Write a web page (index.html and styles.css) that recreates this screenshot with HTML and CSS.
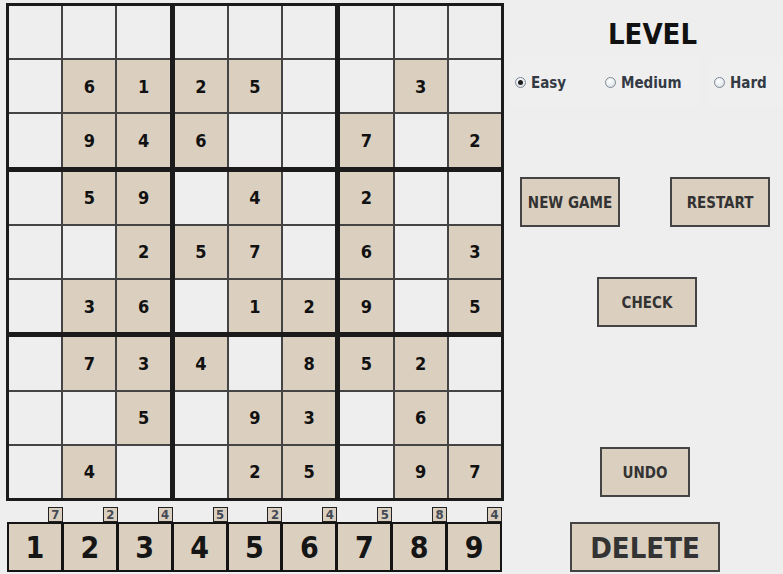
FILE: index.html
```html
<!DOCTYPE html>
<html>
<head>
<meta charset="utf-8">
<title>Sudoku</title>
<link rel="stylesheet" href="styles.css">
</head>
<body>
<div class="app">
  <div class="left">
    <div class="board">
      <div class="block">
        <div class="cell"></div><div class="cell"></div><div class="cell"></div>
        <div class="cell"></div><div class="cell given">6</div><div class="cell given">1</div>
        <div class="cell"></div><div class="cell given">9</div><div class="cell given">4</div>
      </div>
      <div class="block">
        <div class="cell"></div><div class="cell"></div><div class="cell"></div>
        <div class="cell given">2</div><div class="cell given">5</div><div class="cell"></div>
        <div class="cell given">6</div><div class="cell"></div><div class="cell"></div>
      </div>
      <div class="block">
        <div class="cell"></div><div class="cell"></div><div class="cell"></div>
        <div class="cell"></div><div class="cell given">3</div><div class="cell"></div>
        <div class="cell given">7</div><div class="cell"></div><div class="cell given">2</div>
      </div>
      <div class="block">
        <div class="cell"></div><div class="cell given">5</div><div class="cell given">9</div>
        <div class="cell"></div><div class="cell"></div><div class="cell given">2</div>
        <div class="cell"></div><div class="cell given">3</div><div class="cell given">6</div>
      </div>
      <div class="block">
        <div class="cell"></div><div class="cell given">4</div><div class="cell"></div>
        <div class="cell given">5</div><div class="cell given">7</div><div class="cell"></div>
        <div class="cell"></div><div class="cell given">1</div><div class="cell given">2</div>
      </div>
      <div class="block">
        <div class="cell given">2</div><div class="cell"></div><div class="cell"></div>
        <div class="cell given">6</div><div class="cell"></div><div class="cell given">3</div>
        <div class="cell given">9</div><div class="cell"></div><div class="cell given">5</div>
      </div>
      <div class="block">
        <div class="cell"></div><div class="cell given">7</div><div class="cell given">3</div>
        <div class="cell"></div><div class="cell"></div><div class="cell given">5</div>
        <div class="cell"></div><div class="cell given">4</div><div class="cell"></div>
      </div>
      <div class="block">
        <div class="cell given">4</div><div class="cell"></div><div class="cell given">8</div>
        <div class="cell"></div><div class="cell given">9</div><div class="cell given">3</div>
        <div class="cell"></div><div class="cell given">2</div><div class="cell given">5</div>
      </div>
      <div class="block">
        <div class="cell given">5</div><div class="cell given">2</div><div class="cell"></div>
        <div class="cell"></div><div class="cell given">6</div><div class="cell"></div>
        <div class="cell"></div><div class="cell given">9</div><div class="cell given">7</div>
      </div>
    </div>
    <div class="numbar">
      <div class="num">1<span class="badge">7</span></div>
      <div class="num">2<span class="badge">2</span></div>
      <div class="num">3<span class="badge">4</span></div>
      <div class="num">4<span class="badge">5</span></div>
      <div class="num">5<span class="badge">2</span></div>
      <div class="num">6<span class="badge">4</span></div>
      <div class="num">7<span class="badge">5</span></div>
      <div class="num">8<span class="badge">8</span></div>
      <div class="num">9<span class="badge">4</span></div>
    </div>
  </div>
  <div class="panel">
    <div class="level">LEVEL</div>
    <div class="radios">
      <div class="radio-group">
        <div class="radio r-easy"><span class="dot checked"></span><span class="rlabel">Easy</span></div>
        <div class="radio r-medium"><span class="dot"></span><span class="rlabel">Medium</span></div>
      </div>
      <div class="radio-group hard-group">
        <div class="radio"><span class="dot"></span><span class="rlabel">Hard</span></div>
      </div>
    </div>
    <div class="row row-1">
      <div class="btn">NEW GAME</div>
      <div class="btn btn-restart">RESTART</div>
    </div>
    <div class="row row-check">
      <div class="btn">CHECK</div>
    </div>
    <div class="row row-undo">
      <div class="btn btn-undo">UNDO</div>
    </div>
    <div class="row row-delete">
      <div class="btn btn-delete">DELETE</div>
    </div>
  </div>
</div>
</body>
</html>
```
FILE: styles.css
```css
html, body {
  margin: 0;
  padding: 0;
  background: #eeeeee;
}
body {
  font-family: "DejaVu Sans Condensed", "DejaVu Sans", sans-serif;
  font-stretch: condensed;
  font-weight: bold;
  width: 783px;
  height: 574px;
  overflow: hidden;
}
.app {
  display: flex;
  width: 783px;
  height: 574px;
  overflow: hidden;
}
.left {
  box-sizing: border-box;
  padding: 3px 0 0 6px;
  width: 504px;
  flex: none;
}
.board {
  box-sizing: border-box;
  width: 498px;
  height: 498px;
  border: 3px solid #1b1b1b;
  background: #1b1b1b;
  display: grid;
  grid-template-columns: repeat(3, 1fr);
  grid-template-rows: repeat(3, 1fr);
  gap: 5px;
}
.block {
  display: grid;
  grid-template-columns: repeat(3, 1fr);
  grid-template-rows: repeat(3, 1fr);
  gap: 2px;
  background: #444444;
}
.cell {
  background: #eeeeee;
  display: flex;
  align-items: center;
  justify-content: center;
  font-size: 18px;
  color: #111111;
}
.cell.given {
  background: #dbd0c0;
}
.numbar {
  margin: 21px 0 0 1px;
  box-sizing: border-box;
  width: 495px;
  height: 50px;
  border: 2px solid #141414;
  background: #141414;
  display: flex;
  gap: 3px;
}
.num {
  position: relative;
  flex: 1;
  background: #dbd0c0;
  display: flex;
  align-items: center;
  justify-content: center;
  font-size: 30px;
  color: #151515;
}
.badge {
  position: absolute;
  top: -17px;
  right: -2px;
  box-sizing: border-box;
  width: 15px;
  height: 15px;
  border: 1px solid #222222;
  background: #dbd0c0;
  color: #444a55;
  font-size: 13px;
  line-height: 13px;
  text-align: center;
}
.panel {
  flex: none;
  width: 279px;
  display: flex;
  flex-direction: column;
}
.level {
  margin-top: 17px;
  margin-left: 18px;
  width: 261px;
  text-align: center;
  font-size: 29px;
  line-height: 34px;
  color: #111111;
}
.radios {
  margin-top: 6px;
  height: 50px;
  display: flex;
}
.radio-group {
  display: flex;
  align-items: center;
  margin-left: 6px;
  width: 190px;
  background: #efefef;
}
.hard-group {
  margin-left: 10px;
  width: 73px;
}
.radio {
  display: flex;
  align-items: center;
  gap: 5px;
  font-size: 15px;
  color: #333a44;
  padding-top: 1px;
}
.r-easy {
  margin-left: 5px;
  width: 90px;
}
.r-medium {
  width: 95px;
}
.hard-group .radio {
  margin-left: 4px;
}
.dot {
  box-sizing: border-box;
  width: 11px;
  height: 11px;
  border-radius: 50%;
  border: 1px solid #7d8894;
  background: radial-gradient(circle at 40% 35%, #ffffff 0%, #e8ecf0 55%, #c9d0d8 100%);
  display: flex;
  align-items: center;
  justify-content: center;
}
.dot.checked::after {
  content: "";
  width: 5px;
  height: 5px;
  border-radius: 50%;
  background: #1e1e1e;
}
.row {
  display: flex;
}
.row-1 {
  margin-top: 70px;
  padding-left: 16px;
  gap: 50px;
}
.row-check {
  margin-top: 50px;
  padding-left: 93px;
}
.row-undo {
  margin-top: 120px;
  padding-left: 96px;
}
.row-delete {
  margin-top: 25px;
  padding-left: 66px;
}
.btn {
  box-sizing: border-box;
  width: 100px;
  height: 50px;
  padding-top: 1px;
  border: 2px solid #444444;
  background: #dbd0c0;
  color: #333333;
  font-size: 15px;
  display: flex;
  align-items: center;
  justify-content: center;
}
.btn-undo {
  width: 90px;
}
.btn-delete {
  width: 150px;
  font-size: 29px;
}
```
